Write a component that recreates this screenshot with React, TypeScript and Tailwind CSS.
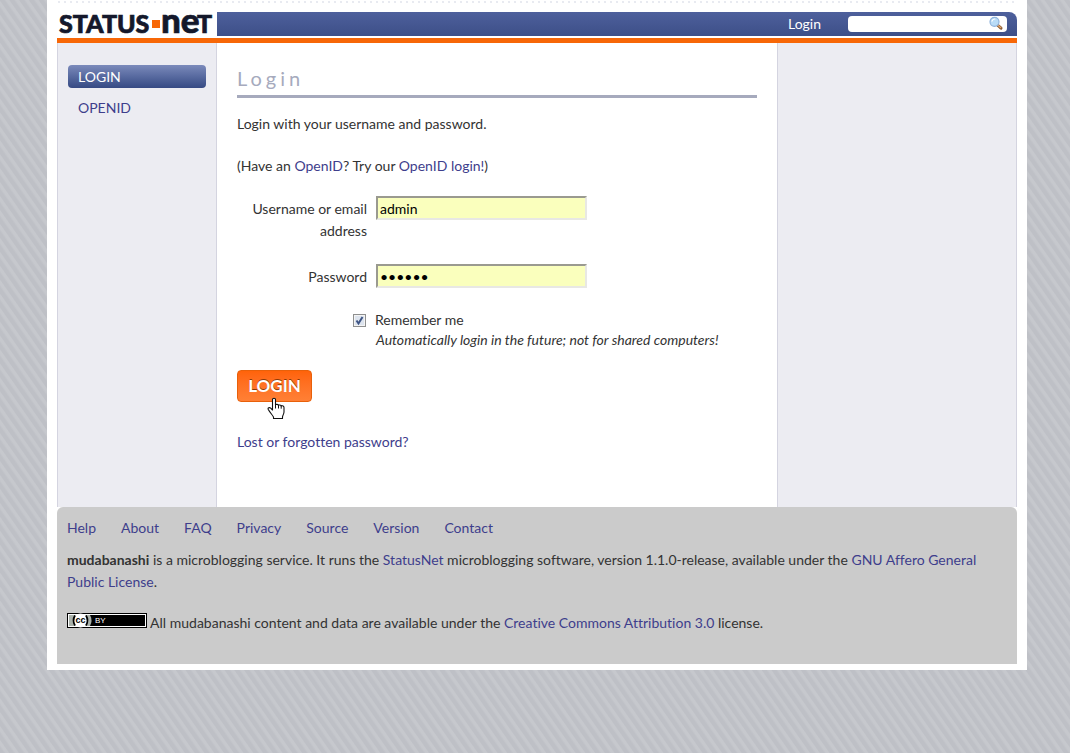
import React, { useState } from 'react';

const SIDE_LINKS = [
  { name: 'LOGIN', href: '#login', active: true },
  { name: 'OPENID', href: '#openid', active: false },
];

const FOOTER_LINKS = ['Help', 'About', 'FAQ', 'Privacy', 'Source', 'Version', 'Contact'];

const linkClasses = 'text-[#3e3e8c] hover:underline';

// Site logo
const Logo: React.FC = () => (
  <svg className="block h-6 w-40 overflow-visible" viewBox="0 0 160 24" role="img" aria-label="StatusNet">
    <g fill="#14182b" stroke="#14182b" strokeWidth="0.7" fontFamily="Lato, sans-serif" fontWeight="900">
      <text x="2" y="21" fontSize="25">STATUS</text>
      <text x="104" y="21" fontSize="35">ne</text>
      <text x="140" y="21" fontSize="25">T</text>
    </g>
    <rect x="95" y="8" width="8" height="8" fill="#f76707" />
  </svg>
);

const SearchIcon: React.FC = () => (
  <svg className="h-4 w-4" viewBox="0 0 16 16" aria-hidden="true">
    <path d="M9.5 9l3.5 3.200" stroke="#8a5a33" strokeWidth="3" strokeLinecap="round" />
    <path d="M10 9.2l2.800 2.500" stroke="#e0a468" strokeWidth="1.2" strokeLinecap="round" />
    <circle cx="6.5" cy="5.800" r="4.500" fill="#b9dcf7" stroke="#8fb3dc" strokeWidth="1.2" />
    <path d="M4 5.200a2.800 2.800 0 0 1 2.800-2.200" fill="none" stroke="#fff" strokeWidth="1.2" strokeLinecap="round" />
  </svg>
);

// Hand pointer over the submit button
const Pointer: React.FC = () => (
  <svg className="pointer-events-none absolute left-[30px] top-[27px] h-[23px] w-[18px]" viewBox="0 0 18 23" aria-hidden="true">
    <path
      d="M5.5 13V2.2C5.5.9 8.5.9 8.5 2.2V8c0-1 3-.8 3 .6 0-1 2.7-.8 2.7.6 0-.9 2.8-.6 2.8 1.3V15c0 2-1.5 3.5-1.5 5v1.5h-9V20C5 17.5 3 15.5 1.3 12.5.5 11 2.400 9.900 3.700 11.200z"
      fill="#fff"
      stroke="#111"
      strokeWidth="1.1"
      strokeLinejoin="round"
    />
    <path d="M8.5 7.5v4M11.5 8.5v3M14.2 9.2v2.5" stroke="#111" strokeWidth="1" />
  </svg>
);

// Creative Commons badge
const CcBadge: React.FC = () => (
  <svg className="inline-block h-[15px] w-20 align-baseline" viewBox="0 0 80 15" role="img" aria-label="Creative Commons Attribution 3.0">
    <rect width="80" height="15" fill="#000" />
    <rect x="1" y="1" width="78" height="13" fill="#fff" />
    <rect x="2" y="2" width="76" height="11" fill="#000" />
    <path d="M2 2h21q3 5.5 0 11H2z" fill="#aab2ab" />
    <circle cx="13.5" cy="7.5" r="7" fill="#fff" />
    <path d="M8 2.500q-3 5 0 10M19 2.500q3 5 0 10" fill="none" stroke="#000" strokeWidth="1.8" />
    <text x="8.500" y="10" fontSize="9" fontWeight="700" fontFamily="Liberation Sans, sans-serif">cc</text>
    <text x="28" y="10" fontSize="8" fill="#fff" fontFamily="Liberation Sans, sans-serif">BY</text>
  </svg>
);

const Header: React.FC = () => (
  <header className="border-b-[5px] border-[#f76707]">
    <div className="h-3 bg-[radial-gradient(circle_at_2px_2px,#b4bad0_0px,transparent_1px)] bg-size-[6px_6px] bg-repeat-x" />
    <div className="flex h-[26px] pb-[2px]">
      <a href="#home" className="w-40 shrink-0"><Logo /></a>
      <div className="flex flex-1 items-center justify-end gap-[27px] rounded-tr-lg bg-linear-to-b from-[#4e609c] to-[#3d4f88] pr-[10px]">
        <a href="#login" className="text-white hover:underline">Login</a>
        <form role="search" className="relative flex">
          <input aria-label="Search" type="text" className="h-4 w-[159px] rounded-[4px] bg-white pl-1 pr-5 text-xs outline-none" />
          <button type="button" aria-label="Search" className="absolute right-[3px] top-0"><SearchIcon /></button>
        </form>
      </div>
    </div>
  </header>
);

const inputClasses = 'h-6 w-[211px] border-2 border-t-[#9a9a90] border-l-[#9a9a90] border-r-[#e8e8e4] border-b-[#e8e8e4] bg-[#faffbd] px-[2px] text-black outline-none';

const LoginForm: React.FC = () => {
  const [name, setName] = useState('admin');
  const [password, setPassword] = useState('secret');
  const [remember, setRemember] = useState(true);

  return (
    <form className="mt-[19px]">
      <div className="flex items-start gap-[9px]">
        <label htmlFor="nickname" className="w-[130px] pt-[2px] text-right">Username or email address</label>
        <input id="nickname" type="text" value={name} onChange={(e) => setName(e.target.value)} className={inputClasses} />
      </div>
      <div className="mt-[22px] flex items-start gap-[9px]">
        <label htmlFor="password" className="w-[130px] pt-[2px] text-right">Password</label>
        <input id="password" type="password" value={password} onChange={(e) => setPassword(e.target.value)} className={inputClasses} />
      </div>
      <div className="mt-[21px] flex items-center gap-[9px] pl-[116px]">
        <span className="relative flex">
          <input
            id="rememberme"
            type="checkbox"
            checked={remember}
            onChange={(e) => setRemember(e.target.checked)}
            className="h-[13px] w-[13px] appearance-none border border-[#8e8f8f] bg-[#dde4ee] shadow-[inset_0_0_0_1px_#f4f4f4]"
          />
          {remember && (
            <svg className="pointer-events-none absolute inset-0" viewBox="0 0 13 13" aria-hidden="true">
              <path d="M3.5 6.5l2 3L9.5 3" fill="none" stroke="#3f5585" strokeWidth="2" />
            </svg>
          )}
        </span>
        <label htmlFor="rememberme">Remember me</label>
      </div>
      <p className="-mt-[2px] pl-[139px] italic">Automatically login in the future; not for shared computers!</p>
      <div className="relative mt-[19px] flex">
        <button type="button" className="h-8 w-[75px] rounded-[4px] border border-[#e8600a] bg-linear-to-b from-[#ff6309] to-[#ff8035] text-[17px] font-bold text-white [text-shadow:0_-1px_0_#8a3a08]">
          LOGIN
        </button>
        <Pointer />
      </div>
    </form>
  );
};

const Footer: React.FC = () => (
  <footer className="rounded-t-md bg-[#cbcbcb] px-[10px] pb-[30px] pt-[10px]">
    <nav className="flex gap-[25px]">
      {FOOTER_LINKS.map((link) => (
        <a key={link} href={`#${link.toLowerCase()}`} className={linkClasses}>{link}</a>
      ))}
    </nav>
    <p className="mt-[10px]">
      <b>mudabanashi</b> is a microblogging service. It runs the <a href="#statusnet" className={linkClasses}>StatusNet</a> microblogging software, version 1.1.0-release, available under the <a href="#agpl" className={linkClasses}>GNU Affero General Public License</a>.
    </p>
    <p className="mt-[19px]">
      <CcBadge /> All mudabanashi content and data are available under the <a href="#cc" className={linkClasses}>Creative Commons Attribution 3.0</a> license.
    </p>
  </footer>
);

const App: React.FC = () => {
  return (
    <div className="min-h-screen bg-[#c2c4ca] bg-[repeating-linear-gradient(55deg,#bec0c6_0px,#bec0c6_3px,#c6c8cd_5px,#c6c8cd_7px,#bec0c6_8px)] pl-1 font-[Lato,sans-serif] text-[14px] leading-[22px] text-[#333] [font-variant-ligatures:none]">
      <div className="mx-auto max-w-[980px] bg-white px-[10px] pb-[6px]">
        <Header />
        <div className="flex min-h-[464px] border-x border-[#d4d4e0] bg-[#ececf2]">
          <nav className="flex w-[158px] shrink-0 flex-col gap-2 px-[10px] pt-[22px] leading-[23px]">
            {SIDE_LINKS.map((link) => (
              <a
                key={link.name}
                href={link.href}
                className={link.active ? 'rounded-[4px] bg-linear-to-b from-[#7b8abb] to-[#364a84] px-[10px] text-white' : `px-[10px] ${linkClasses}`}
              >
                {link.name}
              </a>
            ))}
          </nav>
          <main className="flex-1 border-x border-[#d4d4e0] bg-white px-5 pt-[22px]">
            <h1 className="border-b-[3px] border-[#a6aabd] pb-[3px] text-[20px] leading-[27px] tracking-[4px] text-[#a6aabd]">Login</h1>
            <p className="mt-[15px]">Login with your username and password.</p>
            <p className="mt-[20px]">
              (Have an <a href="#openid" className={linkClasses}>OpenID</a>? Try our <a href="#openid" className={linkClasses}>OpenID login!</a>)
            </p>
            <LoginForm />
            <p className="mt-[29px]"><a href="#recover" className={linkClasses}>Lost or forgotten password?</a></p>
          </main>
          <aside className="w-[238px] shrink-0" />
        </div>
        <Footer />
      </div>
    </div>
  );
};

export default App;
